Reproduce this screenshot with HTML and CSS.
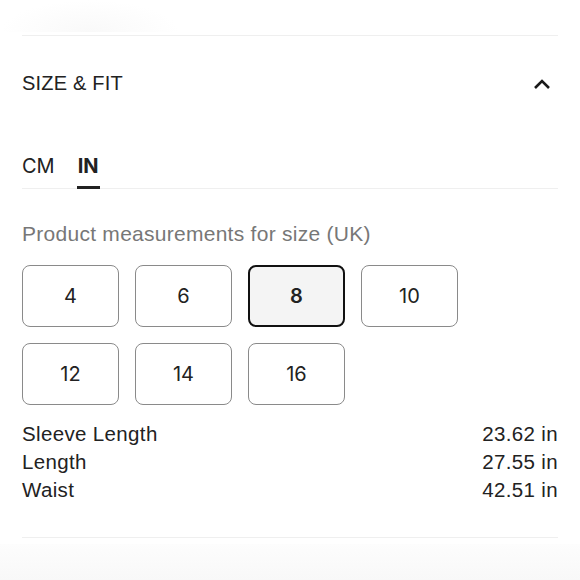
FILE: index.html
```html
<!DOCTYPE html>
<html>
<head>
<meta charset="utf-8">
<link rel="stylesheet" href="styles.css">
</head>
<body>
<div class="top-fade"></div>
<div class="page">
  <div class="divider first"></div>
  <div class="section-head">
    <span class="title">SIZE &amp; FIT</span>
    <svg class="chev" width="18" height="12" viewBox="0 0 18 12"><path d="M2 10 L9 3 L16 10" fill="none" stroke="#1a1a1a" stroke-width="2.6"/></svg>
  </div>
  <div class="tabs">
    <span class="tab">CM</span>
    <span class="tab active">IN</span>
  </div>
  <p class="caption">Product measurements for size (UK)</p>
  <div class="sizes">
    <div class="size">4</div>
    <div class="size">6</div>
    <div class="size selected">8</div>
    <div class="size">10</div>
    <div class="size">12</div>
    <div class="size">14</div>
    <div class="size">16</div>
  </div>
  <div class="measures">
    <div class="row"><span>Sleeve Length</span><span>23.62 in</span></div>
    <div class="row"><span>Length</span><span>27.55 in</span></div>
    <div class="row"><span>Waist</span><span>42.51 in</span></div>
  </div>
  <div class="divider last"></div>
</div>
<div class="bottom-fade"></div>
</body>
</html>
```
FILE: styles.css
```css
html, body {
  margin: 0;
  padding: 0;
  background: #fff;
}
body {
  width: 580px;
  height: 580px;
  overflow: hidden;
  position: relative;
  font-family: "Liberation Sans", Arial, sans-serif;
  color: #222;
}
.top-fade {
  position: absolute;
  left: 0;
  top: 0;
  width: 180px;
  height: 32px;
  background: radial-gradient(ellipse at 50% 100%, #f9f9f9 0%, rgba(255,255,255,0) 70%);
}
.page {
  padding: 35px 22px 0 22px;
}
.divider {
  height: 1px;
  background: #efefef;
}
.section-head {
  display: flex;
  justify-content: space-between;
  align-items: center;
  height: 94px;
}
.title {
  font-size: 20px;
  letter-spacing: 0.2px;
  color: #222;
}
.chev {
  margin-right: 7px;
  margin-top: 2px;
}
.tabs {
  display: flex;
  gap: 22px;
  border-bottom: 1px solid #efefef;
  height: 58px;
  align-items: flex-end;
}
.tab {
  font-family: Inter, "Liberation Sans", sans-serif;
  font-size: 20px;
  color: #222;
  padding-bottom: 8px;
  border-bottom: 3px solid transparent;
  margin-bottom: -1px;
}
.tab.active {
  font-weight: 700;
  border-bottom-color: #222;
  padding: 0 1px 8px 1px;
}
.caption {
  margin: 33px 0 19px 0;
  font-size: 21px;
  letter-spacing: 0.27px;
  color: #777;
  line-height: 24px;
}
.sizes {
  display: grid;
  grid-template-columns: repeat(4, 97px);
  column-gap: 16px;
  row-gap: 16px;
}
.size {
  height: 60px;
  border: 1px solid #8a8a8a;
  border-radius: 8px;
  display: flex;
  align-items: center;
  justify-content: center;
  font-family: Inter, "Liberation Sans", sans-serif;
  font-size: 20px;
  color: #222;
}
.size.selected {
  border: 2px solid #111;
  height: 58px;
  background: #f4f4f4;
  font-weight: 600;
}
.measures {
  margin-top: 15px;
}
.row {
  display: flex;
  justify-content: space-between;
  font-size: 20.5px;
  letter-spacing: 0.35px;
  line-height: 28px;
  color: #222;
}
.last {
  margin-top: 33px;
}
.bottom-fade {
  position: absolute;
  left: 0;
  bottom: 0;
  width: 580px;
  height: 36px;
  background: linear-gradient(#fdfdfd, #f8f8f8);
}
```
